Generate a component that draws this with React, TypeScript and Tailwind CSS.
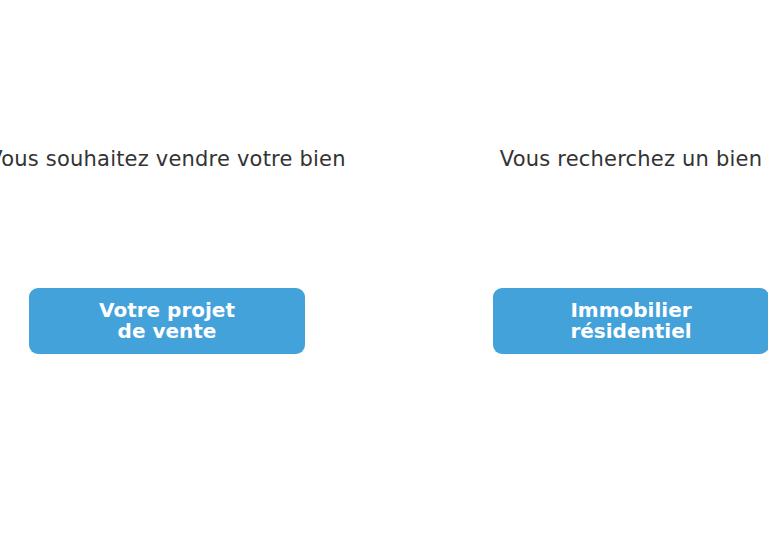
export default function App() {
  return (
    <div className="w-[768px] h-[556px] overflow-hidden bg-white" style={{ fontFamily: '"DejaVu Sans", sans-serif' }}>
      <div className="flex gap-[44px] -ml-[43px] pt-[145px]">
        {[
          { t: "Vous souhaitez vendre votre bien", b: ["Votre projet", "de vente"] },
          { t: "Vous recherchez un bien", b: ["Immobilier", "résidentiel"] },
        ].map((c) => (
          <div key={c.t} className="w-[420px] shrink-0 flex flex-col items-center">
            <p className="text-[21px] leading-[28px] tracking-[0.2px] text-[#333333] whitespace-nowrap">{c.t}</p>
            <div className="mt-[115px] w-[276px] h-[66px] rounded-[9px] bg-[#44a2db] flex flex-col items-center justify-center text-white font-bold text-[20px] leading-[21px]">
              <span>{c.b[0]}</span>
              <span>{c.b[1]}</span>
            </div>
          </div>
        ))}
      </div>
    </div>
  );
}
